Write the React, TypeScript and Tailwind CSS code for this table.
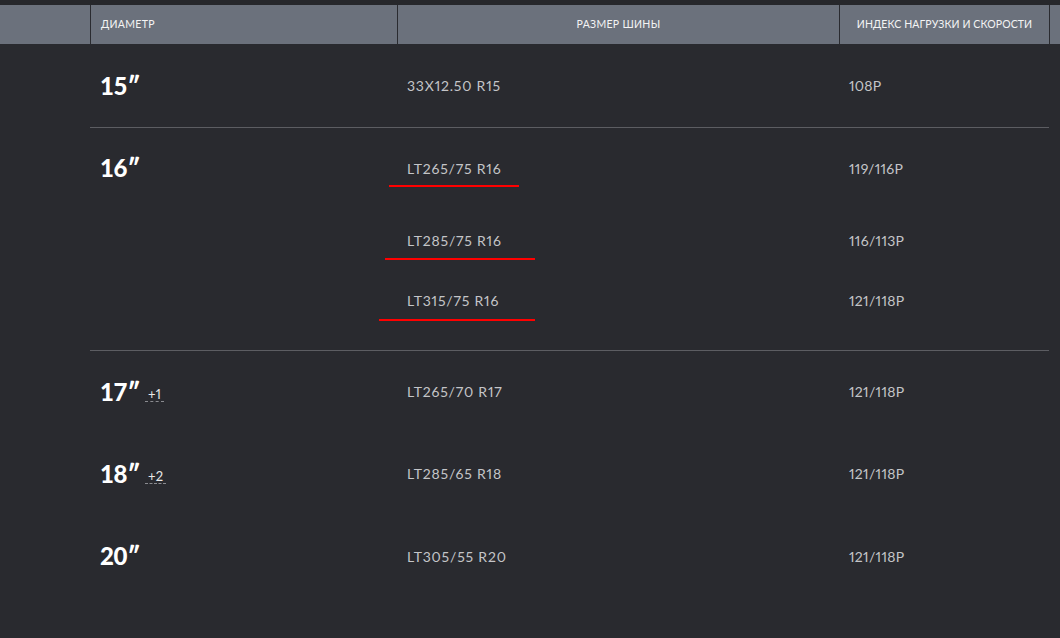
import React from 'react';

interface SizeItem {
  size: string;
  index: string;
  mark?: { left: number; width: number; top: number };
}

interface Group {
  diameter: string;
  extra?: string;
  items: SizeItem[];
  heights: number[];
  padBottom?: number;
  line?: boolean;
}

const GROUPS: Group[] = [
  { diameter: '15', items: [{ size: '33X12.50 R15', index: '108P' }], heights: [83], line: true },
  {
    diameter: '16',
    items: [
      { size: 'LT265/75 R16', index: '119/116P', mark: { left: -9, width: 130, top: 57 } },
      { size: 'LT285/75 R16', index: '116/113P', mark: { left: -13, width: 150, top: 50 } },
      { size: 'LT315/75 R16', index: '121/118P', mark: { left: -19, width: 156, top: 47 } },
    ],
    heights: [80, 64, 56],
    padBottom: 22,
    line: true,
  },
  { diameter: '17', extra: '+1', items: [{ size: 'LT265/70 R17', index: '121/118P' }], heights: [81] },
  { diameter: '18', extra: '+2', items: [{ size: 'LT285/65 R18', index: '121/118P' }], heights: [83] },
  { diameter: '20', items: [{ size: 'LT305/55 R20', index: '121/118P' }], heights: [82] },
];

const font = { fontFamily: 'Lato, "Noto Sans", sans-serif' };

const DiameterCell: React.FC<{ g: Group }> = ({ g }) => (
  <div className="flex items-center pl-[10px]" style={{ height: g.heights[0] }}>
    <span className="text-[24px] font-black text-white leading-none tracking-[-0.3px] tabular-nums">
      {g.diameter}
      <span>″</span>
    </span>
    {g.extra && (
      <span className="ml-[5px] mt-[6px] text-[13px] leading-[14px] text-[#e8e8e8] border-b border-dashed border-[#8a8b90] px-[3px]">
        {g.extra}
      </span>
    )}
  </div>
);

export default function App() {
  return (
    <div className="w-[1060px] h-[638px] bg-[#292a2f] overflow-hidden proportional-nums" style={font}>
      <div className="h-[5px] bg-[#26272b]" />
      <div className="grid grid-cols-[91px_307px_442px_210px_10px] h-[39px] bg-[#6b717c] text-[10.5px] tracking-[0.3px] text-[#f4f4f4] uppercase">
        <div className="border-r border-[#2a2b30]" />
        <div className="border-r border-[#2a2b30] flex items-center pl-[10px]">Диаметр</div>
        <div className="border-r border-[#2a2b30] flex items-center justify-center">Размер шины</div>
        <div className="border-r border-[#2a2b30] flex items-center justify-center tracking-[0.1px]">Индекс нагрузки и скорости</div>
        <div />
      </div>
      {GROUPS.map((g) => (
        <div key={g.diameter} className="ml-[90px] w-[959px]">
          <div className="grid grid-cols-[308px_442px_209px]" style={{ paddingBottom: g.padBottom ?? 0 }}>
            <DiameterCell g={g} />
            <div>
              {g.items.map((it, i) => (
                <div key={it.size} className="relative flex items-center pl-[9px]" style={{ height: g.heights[i] }}>
                  <span className="text-[14px] text-[#c4c5c8] tracking-[0.8px]">{it.size}</span>
                  {it.mark && (
                    <div
                      className="absolute h-[2px] bg-[#ff0000]"
                      style={{ left: it.mark.left, width: it.mark.width, top: it.mark.top }}
                    />
                  )}
                </div>
              ))}
            </div>
            <div>
              {g.items.map((it, i) => (
                <div key={it.index + i} className="flex items-center pl-[9px]" style={{ height: g.heights[i] }}>
                  <span className="text-[14px] text-[#c4c5c8] tracking-[0.3px]">{it.index}</span>
                </div>
              ))}
            </div>
          </div>
          {g.line && <div className="h-px bg-[#5c5d62]" />}
        </div>
      ))}
    </div>
  );
}
